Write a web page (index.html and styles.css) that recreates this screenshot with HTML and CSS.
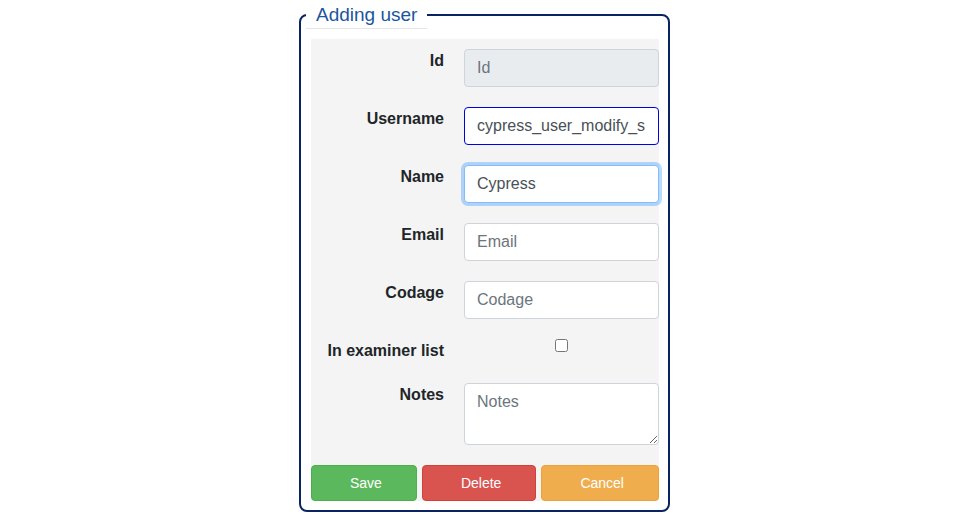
FILE: index.html
```html
<!DOCTYPE html>
<html lang="en">
<head>
<meta charset="utf-8">
<title>Adding user</title>
<link rel="stylesheet" href="styles.css">
</head>
<body>
<fieldset class="panel">
  <legend class="panel-title">Adding user</legend>
  <form class="form-body">
    <div class="form-row">
      <label class="form-label" for="f-id">Id</label>
      <input class="field field-readonly" id="f-id" type="text" placeholder="Id" readonly>
    </div>
    <div class="form-row">
      <label class="form-label" for="f-username">Username</label>
      <input class="field field-active" id="f-username" type="text" value="cypress_user_modify_s">
    </div>
    <div class="form-row">
      <label class="form-label" for="f-name">Name</label>
      <input class="field field-focus" id="f-name" type="text" value="Cypress">
    </div>
    <div class="form-row">
      <label class="form-label" for="f-email">Email</label>
      <input class="field" id="f-email" type="text" placeholder="Email">
    </div>
    <div class="form-row">
      <label class="form-label" for="f-codage">Codage</label>
      <input class="field" id="f-codage" type="text" placeholder="Codage">
    </div>
    <div class="form-row">
      <label class="form-label" for="f-exam">In examiner list</label>
      <input class="check" id="f-exam" type="checkbox">
    </div>
    <div class="form-row">
      <label class="form-label" for="f-notes">Notes</label>
      <textarea class="field field-area" id="f-notes" rows="2" placeholder="Notes"></textarea>
    </div>
    <div class="actions">
      <button type="button" class="btn btn-save">Save</button>
      <button type="button" class="btn btn-delete">Delete</button>
      <button type="button" class="btn btn-cancel">Cancel</button>
    </div>
  </form>
</fieldset>
</body>
</html>
```

FILE: styles.css
```css
html, body {
  margin: 0;
  padding: 0;
  background: #ffffff;
  font-family: "Liberation Sans", Arial, sans-serif;
}

.panel {
  box-sizing: border-box;
  width: 371px;
  margin: 1px auto 0 299px;
  padding: 10px 9px 9px 10px;
  border: 2px solid #0a2463;
  border-radius: 8px;
}

.panel-title {
  margin-left: -5px;
  padding: 0 10px;
  font-size: 19px;
  line-height: 27px;
  color: #1a56a0;
  border-bottom: 1px solid #e5e5e5;
}

.form-body {
  display: grid;
  row-gap: 20px;
  margin: 0;
  padding-top: 10px;
  background: #f4f4f4;
}

.form-row {
  display: grid;
  grid-template-columns: 133px 195px;
  column-gap: 20px;
  align-items: start;
}

.form-label {
  text-align: right;
  font-weight: bold;
  font-size: 16px;
  line-height: 24px;
  color: #212529;
}

.field {
  box-sizing: border-box;
  width: 195px;
  height: 38px;
  margin: 0;
  padding: 6px 12px;
  font-family: "Liberation Sans", Arial, sans-serif;
  font-size: 16px;
  line-height: 24px;
  color: #495057;
  background: #ffffff;
  border: 1px solid #ced4da;
  border-radius: 4px;
  outline: none;
}

.field::placeholder {
  color: #6c757d;
  opacity: 1;
}

.field-readonly {
  background: #e9ecef;
}

.field-active {
  border-color: #0000e6;
}

.field-focus {
  border-color: #80bdff;
  box-shadow: 0 0 0 3px rgba(0, 123, 255, 0.28);
}

.field-area {
  height: 62px;
  display: block;
  resize: vertical;
}

.check {
  justify-self: center;
  width: 13px;
  height: 13px;
  margin: 0;
}

.actions {
  display: flex;
  gap: 5px;
}

.btn {
  flex: 1 1 auto;
  box-sizing: border-box;
  height: 36px;
  padding: 6px 10px 6px 14px;
  font-family: "Liberation Sans", Arial, sans-serif;
  font-size: 14px;
  color: #ffffff;
  border: 1px solid transparent;
  border-radius: 4px;
  cursor: pointer;
}

.btn-save {
  background: #5cb85c;
  border-color: #4cae4c;
}

.btn-delete {
  background: #d9534f;
  border-color: #d43f3a;
}

.btn-cancel {
  background: #f0ad4e;
  border-color: #eea236;
}
```
